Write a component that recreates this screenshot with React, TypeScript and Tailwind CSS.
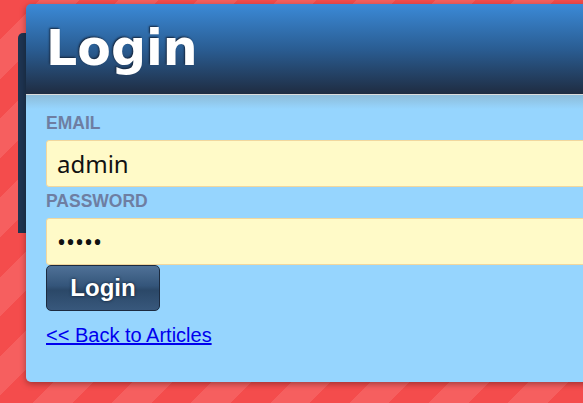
import React from "react";

function Field({ label, type, value }: { label: string; type: string; value: string }) {
  return (
    <>
      <label className="block h-[20px] text-[17.5px] leading-[20px] font-bold text-[#6e7ea2] font-['Liberation_Sans',sans-serif]">
        {label}
      </label>
      <input
        type={type}
        value={value}
        readOnly
        className="mt-[7px] block h-[47px] w-full rounded-[3px] border border-[#f1d79e] bg-[#fffac8] pl-[10px] text-[24px] text-[#111] font-['Noto_Sans',sans-serif] outline-none"
      />
    </>
  );
}

export default function App() {
  return (
    <div className="relative h-[403px] w-full overflow-hidden bg-[repeating-linear-gradient(135deg,#f44c4c_0px,#f44c4c_28px,#f65f5f_28px,#f65f5f_56px)] pl-[26px] pt-[4px]">
      {/* dark panel peeking out behind the card */}
      <div className="absolute left-[18px] top-[33px] h-[200px] w-[40px] rounded-tl-[5px] bg-[#1e3451]" />

      <div className="relative w-[620px] overflow-hidden rounded-[5px] shadow-[0_2px_6px_rgba(0,0,0,0.35)]">
        <div className="h-[90px] bg-[linear-gradient(#3b8ad7,#2a5d93_50%,#1f2c41)] pl-[20px] pt-[20px]">
          <h1 className="text-[49px] leading-[49px] font-bold text-white font-['DejaVu_Sans',sans-serif] [text-shadow:-1px_-1px_2px_#14243a]">
            Login
          </h1>
        </div>
        <div className="border-t border-[#dcdcdc] bg-[linear-gradient(#8dbcd9,#96d5fe_14px)] pb-[34px] pl-[20px] pt-[18px]">
          <Field label="EMAIL" type="text" value="admin" />
          <div className="mt-[4px]">
            <Field label="PASSWORD" type="password" value="admin" />
          </div>
          <button className="block h-[46px] w-[114px] rounded-[5px] border border-[#1c2b40] bg-[linear-gradient(#4f7197,#34557a_45%,#2b4868_55%,#38587c)] text-[24px] font-bold text-white font-['Liberation_Sans',sans-serif] [text-shadow:0_0_3px_#0c1a2c]">
            Login
          </button>
          <a
            href="#"
            className="mt-[13px] inline-block text-[20px] leading-[23px] text-[#0000ee] underline font-['Liberation_Sans',sans-serif]"
          >
            &lt;&lt; Back to Articles
          </a>
        </div>
      </div>
    </div>
  );
}
